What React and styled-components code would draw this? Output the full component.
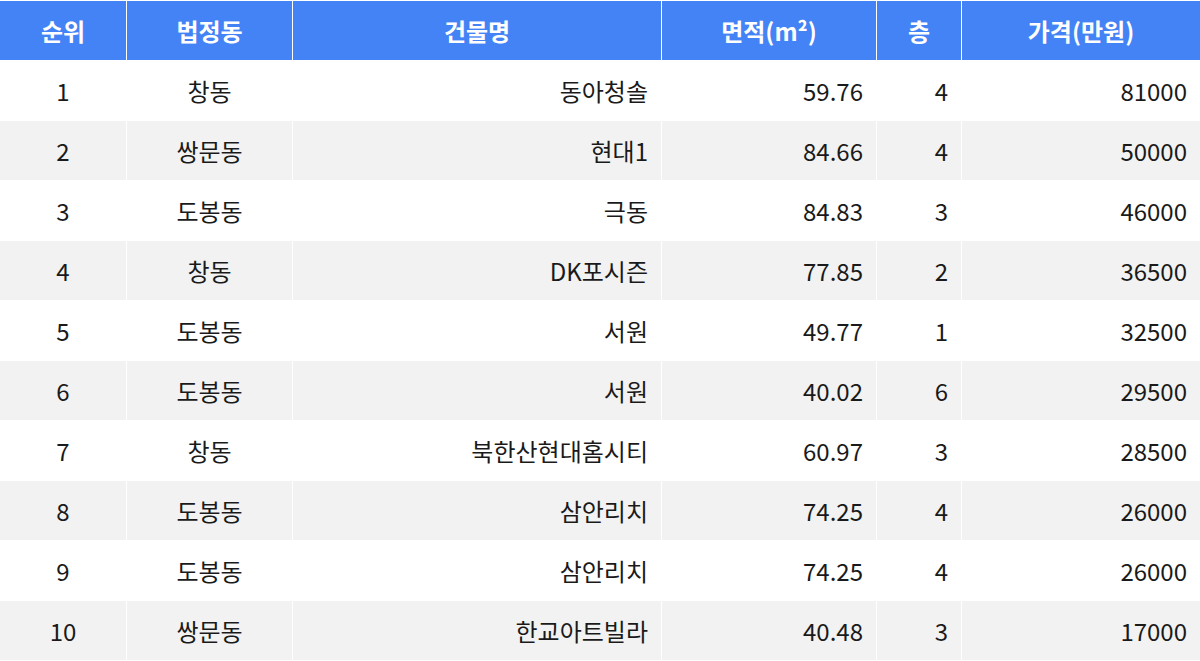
import styled, { createGlobalStyle } from "styled-components";

const rows = [
  [1, "창동", "동아청솔", "59.76", 4, 81000],
  [2, "쌍문동", "현대1", "84.66", 4, 50000],
  [3, "도봉동", "극동", "84.83", 3, 46000],
  [4, "창동", "DK포시즌", "77.85", 2, 36500],
  [5, "도봉동", "서원", "49.77", 1, 32500],
  [6, "도봉동", "서원", "40.02", 6, 29500],
  [7, "창동", "북한산현대홈시티", "60.97", 3, 28500],
  [8, "도봉동", "삼안리치", "74.25", 4, 26000],
  [9, "도봉동", "삼안리치", "74.25", 4, 26000],
  [10, "쌍문동", "한교아트빌라", "40.48", 3, 17000],
];

const align = ["center", "center", "right", "right", "right", "right"];

const GlobalStyle = createGlobalStyle`
  body {
    margin: 0;
    background: #fff;
    font-family: "Noto Sans CJK KR", "Noto Sans", sans-serif;
  }
`;

const Table = styled.div`
  display: grid;
  grid-template-columns: 126px 165px 368px 214px 84px 1fr;
  gap: 1px;
  padding-top: 1px;
  width: 1200px;
  background: #fff;
`;

const HeadCell = styled.div`
  height: 59px;
  display: flex;
  align-items: center;
  justify-content: center;
  background: #4483f5;
  color: #fff;
  font-size: 24px;
  font-weight: 700;
`;

const Cell = styled.div`
  height: 59px;
  display: flex;
  align-items: center;
  justify-content: ${(p) => (p.$align === "right" ? "flex-end" : "center")};
  padding-right: ${(p) => (p.$align === "right" ? "13px" : "0")};
  background: ${(p) => (p.$striped ? "#f2f2f2" : "#fff")};
  color: #1a1a1a;
  font-size: 24px;
`;

export default function App() {
  return (
    <>
      <GlobalStyle />
      <Table>
        {["순위", "법정동", "건물명", "면적(m²)", "층", "가격(만원)"].map((h) => (
          <HeadCell key={h}>{h}</HeadCell>
        ))}
        {rows.map((r, i) =>
          r.map((v, j) => (
            <Cell key={`${i}-${j}`} $align={align[j]} $striped={i % 2 === 1}>
              {v}
            </Cell>
          ))
        )}
      </Table>
    </>
  );
}
